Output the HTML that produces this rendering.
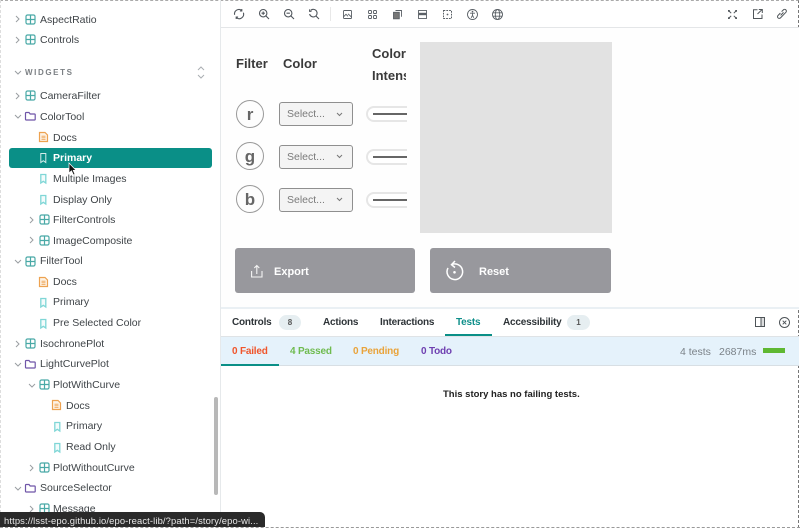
<!DOCTYPE html>
<html><head><meta charset="utf-8"><style>
html,body{margin:0;padding:0}
body{width:800px;height:528px;position:relative;overflow:hidden;background:#fff;font-family:"Liberation Sans",sans-serif;color:#2e3438}
.a{position:absolute}
.t{position:absolute;white-space:nowrap;font-size:10.5px;line-height:14px;color:#3f4448}
.s{margin-top:1px}
.b{font-weight:bold}
svg{position:absolute;overflow:visible;fill:none}
.sel{position:absolute;left:279px;width:72px;height:22px;border:1px solid #8f8f8f;border-radius:3px;background:#f4f4f4}
.circ{position:absolute;left:236px;width:26px;height:26px;border:1px solid #999;border-radius:50%;text-align:center;font-weight:bold;font-size:17px;line-height:27px;color:#666;background:#fdfdfd}
.slider{position:absolute;left:366px;width:39px;height:12px;border:2px solid #e6e6e6;border-right:none;border-radius:8px 0 0 8px;background:#fff}
.slider i{position:absolute;left:5px;top:5px;width:34px;height:1.5px;background:#666}
.btn{position:absolute;top:248px;height:45px;background:#98989d;border-radius:3px}
.p{font-size:10px;letter-spacing:-.2px;top:316px;color:#2e3438}
.q{font-size:10px;letter-spacing:-.2px;top:345px}
</style></head><body>
<svg width="0" height="0" style="position:absolute"><defs>
<g id="comp" transform="translate(.5 1.500)"><rect x=".5" y=".5" width="9" height="9" rx="1.500" stroke="#49a9a6" stroke-width="1.200"/><path d="M5 .5V9.500M.5 5H9.500" stroke="#49a9a6" stroke-width="1.200"/></g>
<g id="fold" transform="translate(0 2)"><path d="M.5 1.200a.7 .7 0 0 1 .7-.7H4L5.200 2H9.500a.7 .7 0 0 1 .7 .7V7.300a.7 .7 0 0 1-.7 .7H1.200a.7 .7 0 0 1-.7-.7Z" stroke="#6f55a8" stroke-width="1.200"/></g>
<g id="doc" transform="translate(0 1)"><path d="M.5 .5H6L8.500 3V9.500H.5Z" stroke="#eda250" stroke-width="1.200" fill="#fdf3e6"/><path d="M2.500 4.200H6.500M2.500 5.800H6.500M2.500 7.400H6.500" stroke="#eda250" stroke-width=".8"/></g>
<g id="mark" transform="translate(1.300 2)"><path d="M.5 .5H5.500V9L3 7.300 .5 9Z" stroke="#7fd6d6" stroke-width="1.300" fill="#f3fbfb"/></g>
<g id="r"><path d="M1 1L4 4 1 7" stroke="#9a9ea2" stroke-width="1"/></g>
<g id="d"><path d="M1 1L4 4 7 1" stroke="#9a9ea2" stroke-width="1"/></g>
</defs></svg>

<!-- dashed frame -->
<div class="a" style="left:0;top:0;width:799px;height:528px;border-top:1px dashed #aaa;border-right:1px dashed #777;box-sizing:border-box"></div>
<div class="a" style="left:0;top:0;width:1px;height:528px;border-left:1px dashed #ddd"></div>

<!-- sidebar -->
<div class="a" style="left:220px;top:0;width:1px;height:528px;background:#e6e9eb"></div>
<div class="a" style="left:9px;top:148px;width:203px;height:20px;background:#0a8f87;border-radius:3px"></div>
<div class="a" style="left:214px;top:397px;width:4px;height:98px;background:#b8b8b8;border-radius:2px"></div>

<svg style="left:15px;top:15px" width="5" height="8"><use href="#r"/></svg><svg style="left:25px;top:13px" width="13" height="13"><use href="#comp"/></svg><div class="t s" style="left:40px;top:12px">AspectRatio</div>
<svg style="left:15px;top:36px" width="5" height="8"><use href="#r"/></svg><svg style="left:25px;top:33px" width="13" height="13"><use href="#comp"/></svg><div class="t" style="left:40px;top:33px">Controls</div>

<svg style="left:14px;top:70px" width="8" height="5"><use href="#d"/></svg>
<div class="t b" style="left:25px;top:66px;font-size:8px;letter-spacing:1.6px;color:#7c8084">WIDGETS</div>
<svg style="left:196px;top:66px" width="10" height="13"><path d="M2 4L5 1 8 4M2 9L5 12 8 9" stroke="#aaaeb2"/></svg>

<svg style="left:15px;top:92px" width="5" height="8"><use href="#r"/></svg><svg style="left:25px;top:89px" width="13" height="13"><use href="#comp"/></svg><div class="t s" style="left:40px;top:88px">CameraFilter</div>
<svg style="left:14px;top:114px" width="8" height="5"><use href="#d"/></svg><svg style="left:25px;top:110px" width="13" height="13"><use href="#fold"/></svg><div class="t s" style="left:40px;top:109px">ColorTool</div>
<svg style="left:39px;top:131px" width="10" height="13"><use href="#doc"/></svg><div class="t s" style="left:53px;top:130px">Docs</div>
<svg style="left:39px;top:152px" width="9" height="13"><path d="M1.800 1.500H6.800V10.500L4.300 8.700 1.800 10.500Z" stroke="#d3ecea" stroke-width="1"/></svg><div class="t b" style="left:53px;top:151px;color:#fff">Primary</div>
<svg style="left:39px;top:172px" width="9" height="13"><use href="#mark"/></svg><div class="t s" style="left:53px;top:171px">Multiple Images</div>
<svg style="left:39px;top:193px" width="9" height="13"><use href="#mark"/></svg><div class="t s" style="left:53px;top:192px">Display Only</div>
<svg style="left:29px;top:216px" width="5" height="8"><use href="#r"/></svg><svg style="left:39px;top:213px" width="13" height="13"><use href="#comp"/></svg><div class="t" style="left:53px;top:213px">FilterControls</div>
<svg style="left:29px;top:236px" width="5" height="8"><use href="#r"/></svg><svg style="left:39px;top:234px" width="13" height="13"><use href="#comp"/></svg><div class="t s" style="left:53px;top:233px">ImageComposite</div>
<svg style="left:14px;top:259px" width="8" height="5"><use href="#d"/></svg><svg style="left:25px;top:255px" width="13" height="13"><use href="#comp"/></svg><div class="t s" style="left:40px;top:253px">FilterTool</div>
<svg style="left:39px;top:276px" width="10" height="13"><use href="#doc"/></svg><div class="t" style="left:53px;top:275px">Docs</div>
<svg style="left:39px;top:296px" width="9" height="13"><use href="#mark"/></svg><div class="t s" style="left:53px;top:294px">Primary</div>
<svg style="left:39px;top:317px" width="9" height="13"><use href="#mark"/></svg><div class="t s" style="left:53px;top:315px">Pre Selected Color</div>
<svg style="left:15px;top:340px" width="5" height="8"><use href="#r"/></svg><svg style="left:25px;top:337px" width="13" height="13"><use href="#comp"/></svg><div class="t s" style="left:40px;top:336px">IsochronePlot</div>
<svg style="left:14px;top:362px" width="8" height="5"><use href="#d"/></svg><svg style="left:25px;top:358px" width="13" height="13"><use href="#fold"/></svg><div class="t s" style="left:40px;top:356px">LightCurvePlot</div>
<svg style="left:28px;top:383px" width="8" height="5"><use href="#d"/></svg><svg style="left:39px;top:378px" width="13" height="13"><use href="#comp"/></svg><div class="t s" style="left:53px;top:377px">PlotWithCurve</div>
<svg style="left:52px;top:399px" width="10" height="13"><use href="#doc"/></svg><div class="t s" style="left:66px;top:398px">Docs</div>
<svg style="left:53px;top:420px" width="9" height="13"><use href="#mark"/></svg><div class="t s" style="left:66px;top:418px">Primary</div>
<svg style="left:53px;top:441px" width="9" height="13"><use href="#mark"/></svg><div class="t s" style="left:66px;top:439px">Read Only</div>
<svg style="left:29px;top:464px" width="5" height="8"><use href="#r"/></svg><svg style="left:39px;top:461px" width="13" height="13"><use href="#comp"/></svg><div class="t s" style="left:53px;top:460px">PlotWithoutCurve</div>
<svg style="left:14px;top:486px" width="8" height="5"><use href="#d"/></svg><svg style="left:25px;top:482px" width="13" height="13"><use href="#fold"/></svg><div class="t s" style="left:40px;top:480px">SourceSelector</div>
<svg style="left:29px;top:505px" width="5" height="8"><use href="#r"/></svg><svg style="left:39px;top:502px" width="13" height="13"><use href="#comp"/></svg><div class="t s" style="left:53px;top:501px">Message</div>

<!-- cursor -->
<svg style="left:68px;top:162px" width="9" height="14"><path d="M1 1V11L3.500 8.800 5.500 13 7 12.300 5.200 8.300H8Z" fill="#111" stroke="#fff" stroke-width=".7"/></svg>

<!-- status tooltip -->
<div class="a" style="left:0;top:512px;width:265px;height:15px;background:#2a2a2a;border-radius:0 5px 0 0"></div>
<div class="t" style="left:4px;top:514px;font-size:9.400px;line-height:13px;color:#e8e8e8;letter-spacing:.13px">https://lsst-epo.github.io/epo-react-lib/?path=/story/epo-wi...</div>
<div class="a" style="left:0;top:527px;width:800px;height:0;border-top:1px dashed #999"></div>

<!-- toolbar -->
<div class="a" style="left:221px;top:27px;width:578px;height:1px;background:#e4e6e8"></div>
<div class="a" style="left:330px;top:7px;width:1px;height:14px;background:#e8e8e8"></div>
<svg style="left:234px;top:9px" width="10" height="10" stroke="#50565c" stroke-width="1.100"><path d="M.6 5.800A4.500 4.500 0 0 1 7.500 1.200M9.400 3.700A4.500 4.500 0 0 1 2.500 8.800"/><path d="M7.800 0V1.900H5.900M2.200 10V8.100H4.100"/></svg>
<svg style="left:259px;top:9px" width="10" height="10" stroke="#50565c" stroke-width="1.100"><circle cx="4.200" cy="4.200" r="3.700"/><path d="M7 7L10 10M2.500 4.200H5.900M4.200 2.500V5.900"/></svg>
<svg style="left:284px;top:9px" width="10" height="10" stroke="#50565c" stroke-width="1.100"><circle cx="4.200" cy="4.200" r="3.700"/><path d="M7 7L10 10M2.500 4.200H5.900"/></svg>
<svg style="left:309px;top:9px" width="10" height="10" stroke="#50565c" stroke-width="1.100"><path d="M1.700 1.400A3.800 3.800 0 1 1 .6 5M7 7L10 10M.6 .4V2.300H2.500"/></svg>
<svg style="left:343px;top:9.500px" width="9" height="9" stroke="#5a6066" stroke-width=".9"><rect x=".5" y=".5" width="8" height="8" rx=".8"/><path d="M.5 6.800L3 4.300 5 6.300M5 3.800L8.500 7"/></svg>
<svg style="left:368px;top:9.500px" width="9" height="9" stroke="#5a6066" stroke-width=".9"><rect x=".5" y=".5" width="3" height="3" rx=".8"/><rect x="5.500" y=".5" width="3" height="3" rx=".8"/><rect x=".5" y="5.500" width="3" height="3" rx=".8"/><rect x="5.500" y="5.500" width="3" height="3" rx=".8"/></svg>
<svg style="left:393px;top:9.500px" width="9" height="9" stroke="#5a6066" stroke-width=".9"><rect x=".5" y="2.300" width="5.800" height="6.500" fill="#777"/><path d="M2.500 .5H8.500V6.800"/></svg>
<svg style="left:418px;top:9.500px" width="9" height="9"><rect x=".5" y=".5" width="8" height="8" stroke="#5a6066" stroke-width=".9"/><rect x=".5" y="2.800" width="8" height="2.400" fill="#5a6066"/></svg>
<svg style="left:443px;top:9.500px" width="9" height="9" stroke="#5a6066" stroke-dasharray="1.800 1"><rect x=".5" y=".5" width="8" height="8"/><circle cx="4.500" cy="4.500" r=".4" fill="#5a6066" stroke-dasharray="none"/></svg>
<svg style="left:467px;top:8.500px" width="11" height="11" stroke="#5a6066" stroke-width=".9"><circle cx="5.500" cy="5.500" r="5"/><path d="M3 4.200H8M5.500 4.200V6.300M5.500 6.300L4.200 8.800M5.500 6.300L6.800 8.800"/><circle cx="5.500" cy="2.600" r=".4"/></svg>
<svg style="left:492px;top:8.500px" width="11" height="11" stroke="#5a6066" stroke-width=".9"><circle cx="5.500" cy="5.500" r="5"/><ellipse cx="5.500" cy="5.500" rx="2.200" ry="5"/><path d="M.5 3.800H10.500M.5 7.200H10.500"/></svg>
<svg style="left:728px;top:9.500px" width="9" height="9" stroke="#50565a" stroke-width="1"><path d="M1 1L3.200 3.200M8 1L5.800 3.200M1 8L3.200 5.800M8 8L5.800 5.800"/><path d="M0 0H1.800V1.800H0ZM7.200 0H9V1.800H7.200ZM0 7.200H1.800V9H0ZM7.200 7.200H9V9H7.200Z" fill="#50565a" stroke="none"/></svg>
<svg style="left:753px;top:9px" width="10" height="10" stroke="#50565a" stroke-width="1"><path d="M4.500 .8H.5V9.500H9V5.500M4.500 5L8.800 .8M5.800 .5H9.300V4"/></svg>
<svg style="left:777px;top:9px" width="10" height="10" stroke="#50565a" stroke-width="1"><path d="M4.600 2.600L6.400 .9A1.700 1.700 0 0 1 8.900 3.300L3.500 8.900A1.700 1.700 0 0 1 1 6.500L3.400 4"/><path d="M3.600 6.400L6.500 3.400"/></svg>

<!-- preview -->
<div class="a" style="left:221px;top:28px;width:578px;height:279px;background:#fefefe"></div>
<div class="a" style="left:420px;top:42px;width:192px;height:191px;background:#e2e2e2"></div>
<div class="t b" style="left:236px;top:56px;font-size:13px;line-height:15px;color:#3a3a3a">Filter</div>
<div class="t b" style="left:283px;top:56px;font-size:13px;line-height:15px;color:#3a3a3a">Color</div>
<div class="t b" style="left:372px;top:46px;font-size:13px;line-height:15px;color:#3a3a3a">Color</div>
<div class="t b" style="left:372px;top:68px;width:34px;overflow:hidden;font-size:13px;line-height:15px;color:#3a3a3a">Intensity</div>

<div class="circ" style="top:100px">r</div>
<div class="circ" style="top:142px">g</div>
<div class="circ" style="top:185px">b</div>

<div class="sel" style="top:102px"></div><div class="t" style="left:287px;top:107px;color:#7a7a7a">Select...</div><svg style="left:336px;top:112px" width="7" height="5"><path d="M1 1L3.500 3.500 6 1" stroke="#777"/></svg>
<div class="sel" style="top:145px"></div><div class="t" style="left:287px;top:150px;color:#7a7a7a">Select...</div><svg style="left:336px;top:154px" width="7" height="5"><path d="M1 1L3.500 3.500 6 1" stroke="#777"/></svg>
<div class="sel" style="top:188px"></div><div class="t" style="left:287px;top:193px;color:#7a7a7a">Select...</div><svg style="left:336px;top:197px" width="7" height="5"><path d="M1 1L3.500 3.500 6 1" stroke="#777"/></svg>

<div class="slider" style="top:106px"><i></i></div>
<div class="slider" style="top:149px"><i></i></div>
<div class="slider" style="top:192px"><i></i></div>

<div class="btn" style="left:235px;width:180px"></div>
<svg style="left:251px;top:264px" width="12" height="14" stroke="#f4f4f4" stroke-width="1.100"><path d="M.6 7V13H11V7M5.800 10V1.500M3.300 4L5.800 1.500 8.300 4"/></svg>
<div class="t b" style="left:274px;top:265px;color:#fff;font-size:11px">Export</div>
<div class="btn" style="left:430px;width:181px"></div>
<svg style="left:445px;top:260px" width="20" height="22" stroke="#fff" stroke-width="1.500"><path d="M6.500 4.700A7.800 7.800 0 1 1 3 8"/><path d="M10 1L6.500 4.700 10 7.500"/><circle cx="9.500" cy="12.300" r="1.300" fill="#fff" stroke="none"/></svg>
<div class="t b" style="left:479px;top:265px;color:#fff;font-size:11px">Reset</div>

<!-- addon panel -->
<div class="a" style="left:221px;top:307px;width:578px;height:2px;background:#eaf0f4"></div>
<div class="a" style="left:221px;top:336px;width:578px;height:1px;background:#dfe3e6"></div>
<div class="a" style="left:221px;top:337px;width:578px;height:29px;background:#e5f2fb"></div>
<div class="a" style="left:221px;top:365px;width:578px;height:1px;background:#d8dfe4"></div>
<div class="a" style="left:221px;top:364px;width:58px;height:2px;background:#0a8f87"></div>
<div class="a" style="left:445px;top:334px;width:47px;height:2px;background:#0a8f87"></div>

<div class="t b p" style="left:232px">Controls</div>
<div class="a" style="left:279px;top:315px;width:22px;height:15px;border-radius:8px;background:#e6eef1;text-align:center;font-size:8px;line-height:15px;color:#555;font-weight:bold">8</div>
<div class="t b p" style="left:323px">Actions</div>
<div class="t b p" style="left:380px">Interactions</div>
<div class="t b p" style="left:456px;color:#0f8f8a">Tests</div>
<div class="t b p" style="left:503px">Accessibility</div>
<div class="a" style="left:567px;top:315px;width:23px;height:15px;border-radius:8px;background:#e6eef1;text-align:center;font-size:8px;line-height:15px;color:#555;font-weight:bold">1</div>
<svg style="left:755px;top:317px" width="10" height="10" stroke="#4e5458"><rect x=".5" y=".5" width="9" height="9"/><path d="M6 .5V9.500"/><rect x="6" y=".5" width="3.500" height="9" fill="#4e5458" fill-opacity=".2"/></svg>
<svg style="left:779px;top:317px" width="11" height="11" stroke="#4e5458"><circle cx="5.500" cy="5.500" r="5"/><path d="M3.700 3.700L7.300 7.300M7.300 3.700L3.700 7.300"/></svg>

<div class="t b q" style="left:232px;color:#f0552b">0 Failed</div>
<div class="t b q" style="left:290px;color:#6fbb4f">4 Passed</div>
<div class="t b q" style="left:353px;color:#e9a33a">0 Pending</div>
<div class="t b q" style="left:421px;color:#6e3fb0">0 Todo</div>
<div class="t" style="left:680px;top:345px;color:#7b8288;font-size:10.500px">4 tests</div>
<div class="t" style="left:719px;top:345px;color:#7b8288;font-size:10.500px">2687ms</div>
<div class="a" style="left:763px;top:348px;width:22px;height:5px;background:#5fb832"></div>
<div class="t b" style="left:443px;top:388px;color:#222;font-size:9.500px">This story has no failing tests.</div>
</body></html>
